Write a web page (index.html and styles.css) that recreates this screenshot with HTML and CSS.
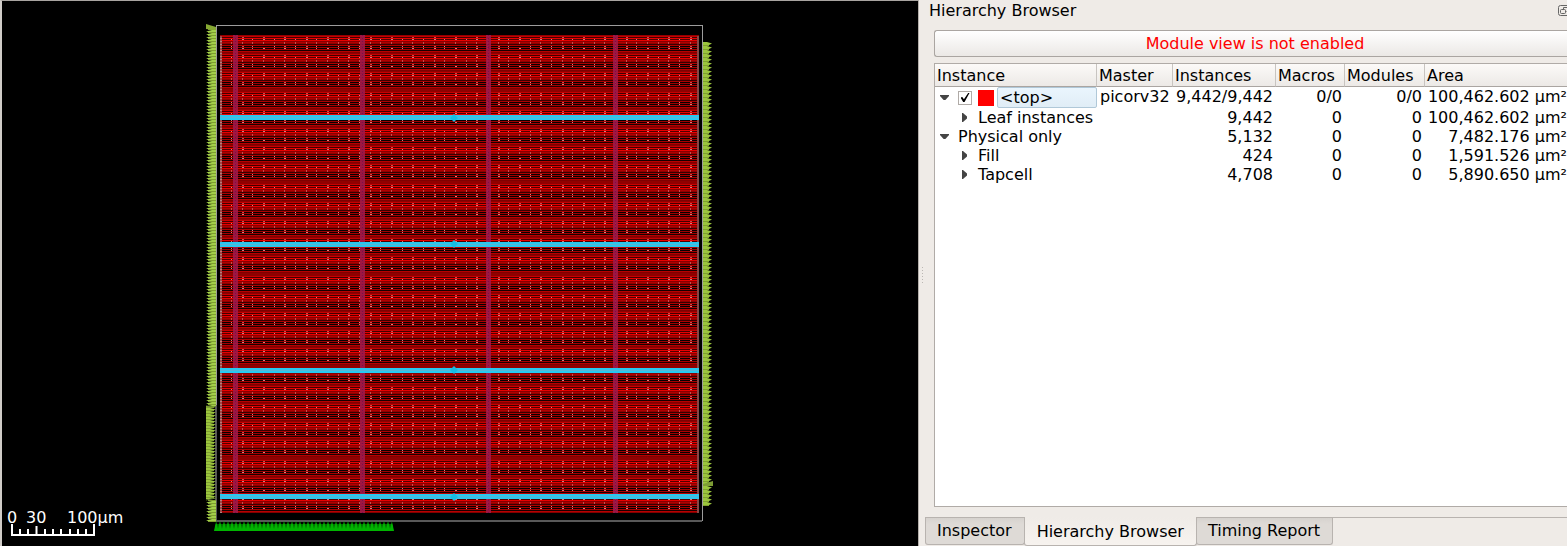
FILE: index.html
```html
<!DOCTYPE html>
<html lang="en">
<head>
<meta charset="utf-8">
<title>Layout Viewer</title>
<link rel="stylesheet" href="styles.css">
</head>
<body>
<div class="app">
  <main class="viewer">
    <svg class="layout" viewBox="2 1 916 545" role="img" aria-label="Chip layout">
      <defs>
        <g id="stripes" shape-rendering="crispEdges">
          <rect width="480" height="20" fill="#900000"/>
          <rect y="1" width="480" height="1" fill="#c80000"/>
          <rect y="2" width="480" height="1" fill="#400000"/>
          <rect y="3" width="480" height="1" fill="#e80000"/>
          <rect y="4" width="480" height="1" fill="#500000"/>
          <rect y="5" width="480" height="1" fill="#e80000"/>
          <rect y="6" width="480" height="1" fill="#880000"/>
          <rect y="7" width="480" height="1" fill="#b00000"/>
          <rect y="9" width="480" height="1" fill="#380000"/>
          <rect y="10" width="480" height="1" fill="#b00000"/>
          <rect y="11" width="480" height="1" fill="#080000"/>
          <rect y="12" width="480" height="1" fill="#a00000"/>
          <rect y="13" width="480" height="1" fill="#080000"/>
          <rect y="14" width="480" height="1" fill="#a80000"/>
          <rect y="15" width="480" height="1" fill="#180000"/>
          <rect y="16" width="480" height="1" fill="#b80000"/>
          <rect y="17" width="480" height="1" fill="#800000"/>
        </g>
        <pattern id="rows" x="220" y="35" width="480" height="92" patternUnits="userSpaceOnUse">
          <use href="#stripes"/>
          <use href="#stripes" y="18"/>
          <use href="#stripes" y="36"/>
          <use href="#stripes" y="56"/>
          <use href="#stripes" y="74"/>
        </pattern>
        <g id="taps" shape-rendering="crispEdges">
          <path fill="#d08080" d="M0 4h1v1h-1zM0 11h1v1h-1zM0 13h1v1h-1zM11 4h2v1h-2zM11 13h2v1h-2zM21 4h1v1h-1zM21 11h1v1h-1zM21 13h1v1h-1zM32 4h2v1h-2zM32 13h2v1h-2zM43 4h1v1h-1zM43 11h1v1h-1zM43 13h1v1h-1zM53 4h2v1h-2zM53 13h2v1h-2z"/>
          <path fill="#c05050" d="M0 7h1v2h-1zM11 2h2v1h-2zM11 7h1v2h-1zM11 11h2v1h-2zM21 7h1v2h-1zM32 2h2v1h-2zM32 7h1v2h-1zM43 7h1v2h-1zM53 2h2v1h-2zM53 7h1v2h-1zM53 11h2v1h-2z"/>
        </g>
        <pattern id="tapcells" x="231" y="35" width="64" height="92" patternUnits="userSpaceOnUse">
          <use href="#taps"/>
          <use href="#taps" y="18"/>
          <use href="#taps" y="36"/>
          <use href="#taps" y="56"/>
          <use href="#taps" y="74"/>
        </pattern>
        <pattern id="edge" x="220" y="35" width="2" height="3" patternUnits="userSpaceOnUse">
          <rect width="2" height="3" fill="#a04848"/>
          <rect width="2" height="1" fill="#b08080"/>
        </pattern>
        <pattern id="pins-left" x="206" y="27" width="10" height="3" patternUnits="userSpaceOnUse">
          <path fill="#a3cf4a" d="M0 1.5L6 0h4v3H6z"/>
          <path fill="#7f9f30" d="M2 2h8v1h-8z"/>
        </pattern>
        <pattern id="pins-inner" x="206" y="405" width="10" height="3" patternUnits="userSpaceOnUse">
          <path fill="#9bc53d" d="M10 1.5L4 0H0v3h4z"/>
          <path fill="#7f9f30" d="M0 2h8v1h-8z"/>
        </pattern>
        <pattern id="pins-right" x="703" y="42" width="9" height="4" patternUnits="userSpaceOnUse">
          <path fill="#9bc53d" d="M9 1.500L4 0H0v4h4z"/>
          <path fill="#7f9f30" d="M0 3h6v1h-6z"/>
        </pattern>
        <pattern id="pins-bottom" x="214" y="521" width="4" height="10" patternUnits="userSpaceOnUse">
          <path fill="#007000" d="M0 3h4v7h-4z"/>
          <path fill="#00b400" d="M2 0L4 8v2H0V8z"/>
        </pattern>
      </defs>

      <rect x="216" y="25" width="487" height="496" fill="#9c9c9c" shape-rendering="crispEdges"/>
      <rect x="217" y="26" width="485" height="494" fill="#000" shape-rendering="crispEdges"/>
      <path d="M216 405v116h486" fill="none" stroke="#585858" stroke-width="2" shape-rendering="crispEdges"/>

      <rect x="206" y="27" width="10" height="379" fill="url(#pins-left)"/>
      <path d="M206 24l10 3v3l-10 -1z" fill="#86a832"/>
      <rect x="206" y="406" width="10" height="93" fill="url(#pins-inner)"/>
      <rect x="206" y="500" width="10" height="22" fill="url(#pins-left)"/>
      <path d="M206 500l10 -2M206 406l9 1" stroke="#66852a"/>
      <rect x="703" y="42" width="9" height="464" fill="url(#pins-right)"/>
      <path d="M703 484l10 -3v5h-10z" fill="#7e9d35"/>
      <path d="M216 521h176l2 10H214z" fill="url(#pins-bottom)"/>

      <rect x="220" y="35" width="479" height="478" fill="url(#rows)"/>
      <rect x="231" y="35" width="464" height="478" fill="url(#tapcells)"/>
      <rect x="220" y="36" width="2" height="477" fill="url(#edge)"/>
      <rect x="697" y="36" width="2" height="477" fill="#884848"/>
      <g fill="#a01848" fill-opacity=".9" shape-rendering="crispEdges">
        <rect x="233" y="35" width="5" height="478"/>
        <rect x="360" y="35" width="5" height="478"/>
        <rect x="486" y="35" width="5" height="478"/>
        <rect x="613" y="35" width="5" height="478"/>
      </g>
      <path d="M235.500 35v478M362.500 35v478M488.500 35v478M615.500 35v478" stroke="#78104c" stroke-dasharray="1 2"/>
      <g fill="#28c8f0" shape-rendering="crispEdges">
        <rect x="220" y="115" width="479" height="5"/>
        <rect x="220" y="242" width="479" height="5"/>
        <rect x="220" y="368" width="479" height="5"/>
        <rect x="220" y="494" width="479" height="5"/>
      </g>
      <path d="M220 117.500h479M220 244.500h479M220 370.500h479M220 496.500h479" stroke="#58b4d4"/>
      <path d="M454 114l4 4-4 4-4-4zM454 240l4 4-4 4-4-4zM454 366l4 4-4 4-4-4zM454 493l4 4-4 4-4-4z" fill="#16bde2"/>

      <g class="scale-text">
        <text x="7" y="523">0</text>
        <text x="26" y="523">30</text>
        <text x="67" y="523">100µm</text>
      </g>
      <path d="M12 524v11h82v-11" fill="none" stroke="#fff" stroke-width="2"/>
      <path d="M20 529v5M28 529v5M36.500 526v8M45 529v5M53 529v5M61 529v5M70 529v5M78 529v5M86 529v5" stroke="#fff" stroke-width="2"/>
    </svg>
  </main>

  <aside class="dock">
    <span class="grip" aria-hidden="true"></span>
    <header class="dock-title">
      <h1>Hierarchy Browser</h1>
      <button class="float" type="button" aria-label="Float panel">
        <svg viewBox="0 0 12 12" fill="none" stroke="#666">
          <rect x=".5" y="1.5" width="15" height="10" rx="2"/>
          <path d="M5.500 5.500v-2h5v4h-2M2.500 6.500q0-1 1-1h3q1 0 1 1v2q0 1-1 1h-3q-1 0-1-1z"/>
        </svg>
      </button>
    </header>
    <button class="notice" type="button">Module view is not enabled</button>
    <div class="tree">
      <table>
        <colgroup>
          <col class="c-instance"><col class="c-master"><col class="c-instances"><col class="c-macros"><col class="c-modules"><col>
        </colgroup>
        <thead>
          <tr><th>Instance</th><th>Master</th><th>Instances</th><th>Macros</th><th>Modules</th><th>Area</th></tr>
        </thead>
        <tbody>
          <tr class="top-row">
            <td><div class="node"><button class="arrow open" type="button" aria-label="Collapse top"></button><input id="top" type="checkbox" checked><span class="swatch"></span><label class="selected" for="top">&lt;top&gt;</label></div></td>
            <td class="text">picorv32</td><td>9,442/9,442</td><td>0/0</td><td>0/0</td><td>100,462.602 µm²</td>
          </tr>
          <tr>
            <td><div class="node child"><button class="arrow" type="button" aria-label="Expand leaf instances"></button>Leaf instances</div></td>
            <td></td><td>9,442</td><td>0</td><td>0</td><td>100,462.602 µm²</td>
          </tr>
          <tr>
            <td><div class="node"><button class="arrow open" type="button" aria-label="Collapse physical only"></button>Physical only</div></td>
            <td></td><td>5,132</td><td>0</td><td>0</td><td>7,482.176 µm²</td>
          </tr>
          <tr>
            <td><div class="node child"><button class="arrow" type="button" aria-label="Expand fill"></button>Fill</div></td>
            <td></td><td>424</td><td>0</td><td>0</td><td>1,591.526 µm²</td>
          </tr>
          <tr>
            <td><div class="node child"><button class="arrow" type="button" aria-label="Expand tapcell"></button>Tapcell</div></td>
            <td></td><td>4,708</td><td>0</td><td>0</td><td>5,890.650 µm²</td>
          </tr>
        </tbody>
      </table>
    </div>
    <nav class="tabs">
      <button type="button">Inspector</button>
      <button class="active" type="button">Hierarchy Browser</button>
      <button type="button">Timing Report</button>
    </nav>
  </aside>
</div>
</body>
</html>
```
FILE: styles.css
```css
* { box-sizing: border-box; }

body {
  margin: 0;
  background: #efebe7;
  color: #000;
  font: 16px/19px "DejaVu Sans", sans-serif;
}

button {
  margin: 0;
  padding: 0;
  border: 0;
  background: none;
  color: inherit;
  font: inherit;
}

.app {
  display: grid;
  grid-template-columns: minmax(0, 1fr) 649px;
  height: 100vh;
  overflow: hidden;
}

.viewer {
  min-height: 0;
  border-top: 1px solid #a8a4a0;
  border-left: 2px solid #d0ccc8;
  background: #000;
}

.layout {
  display: block;
  width: 100%;
  height: 100%;
}

.scale-text {
  fill: #fff;
  font: 16px "DejaVu Sans", sans-serif;
}

.dock {
  position: relative;
  display: flex;
  flex-direction: column;
  min-width: 0;
  padding-left: 15px;
  border-left: 1px solid #b5b0ab;
}

.grip {
  position: absolute;
  top: 267px;
  left: 3px;
  width: 1px;
  height: 16px;
  background: repeating-linear-gradient(#bbb7b3 0 1px, transparent 1px 3px);
}

.dock-title {
  display: flex;
  align-items: center;
  justify-content: space-between;
  height: 20px;
  margin: 0 0 10px -5px;
}

.dock-title h1 {
  margin: 0;
  font-size: 16px;
  font-weight: 400;
}

.float {
  width: 9px;
  height: 12px;
  overflow: hidden;
}

.float svg {
  display: block;
  width: 12px;
  height: 12px;
}

.notice {
  height: 27px;
  margin-bottom: 6px;
  padding-left: 8px;
  border: 1px solid #aaa5a1;
  border-right: 0;
  border-radius: 3px 0 0 3px;
  background: linear-gradient(#fff, #ebe8e5);
  color: #f00;
}

.tree {
  flex: 1;
  overflow: hidden;
  border: 1px solid #b0aba7;
  border-right: 0;
  background: #fff;
}

table {
  width: 100%;
  border-collapse: separate;
  border-spacing: 0;
  table-layout: fixed;
}

.c-instance { width: 162px; }
.c-master { width: 76px; }
.c-instances { width: 103px; }
.c-macros { width: 69px; }
.c-modules { width: 80px; }

th {
  height: 23px;
  padding: 0 2px;
  border-right: 1px solid #c8c4c0;
  border-bottom: 1px solid #aaa5a1;
  background: linear-gradient(#fcfaf8, #ece9e6);
  font-weight: 400;
  text-align: left;
}

th:last-child { border-right: 0; }

td {
  height: 19px;
  padding: 0 3px 0 0;
  text-align: right;
  white-space: nowrap;
}

td:first-child { padding: 0; }
td:last-child { padding: 0; }

td.text {
  padding: 0 0 0 3px;
  text-align: left;
}

.top-row td {
  height: 21px;
  vertical-align: top;
}

.node {
  display: flex;
  align-items: center;
  padding-left: 2px;
}

.child { padding-left: 22px; }

.arrow {
  display: grid;
  place-items: center;
  flex: none;
  width: 15px;
  height: 14px;
  margin-right: 6px;
}

.arrow::before {
  content: "";
  width: 5px;
  height: 9px;
  background: #444;
  clip-path: polygon(0 0, 20% 0, 100% 40%, 100% 60%, 20% 100%, 0 100%);
}

.arrow.open::before {
  width: 9px;
  height: 5px;
  clip-path: polygon(0 0, 100% 0, 100% 20%, 60% 100%, 40% 100%, 0 20%);
}

.node input {
  display: grid;
  place-items: center;
  appearance: none;
  flex: none;
  width: 14px;
  height: 14px;
  margin: 0 6px 0 0;
  border: 1px solid #b0aba7;
  background: #fff;
}

.node input:checked::before {
  content: "";
  width: 9px;
  height: 9px;
  background: #000;
  clip-path: polygon(0 50%, 20% 45%, 38% 70%, 85% 0, 100% 0, 45% 100%, 30% 100%);
}

.swatch {
  flex: none;
  width: 16px;
  height: 16px;
  margin-right: 3px;
  background: #f00;
}

.selected {
  flex: 1;
  height: 21px;
  padding-left: 2px;
  border: 1px solid #b0c8d8;
  border-radius: 2px;
  background: linear-gradient(#eaf5fd, #e0edf6);
  text-align: left;
}

.tabs {
  display: flex;
  align-items: flex-start;
  height: 29px;
  margin: 10px 0 0 -9px;
  border-top: 1px solid #b8b3af;
}

.tabs button {
  height: 27px;
  padding: 0 12px 2px 11px;
  border: 1px solid #b8b3af;
  border-top: 0;
  border-radius: 0 0 3px 3px;
  background: linear-gradient(#d6d2ce, #dedad6 6px);
}

.tabs .active {
  height: 29px;
  margin: -1px -1px 0;
  padding: 0 12px;
  background: linear-gradient(#efebe7, #f7f3ef);
}
```
